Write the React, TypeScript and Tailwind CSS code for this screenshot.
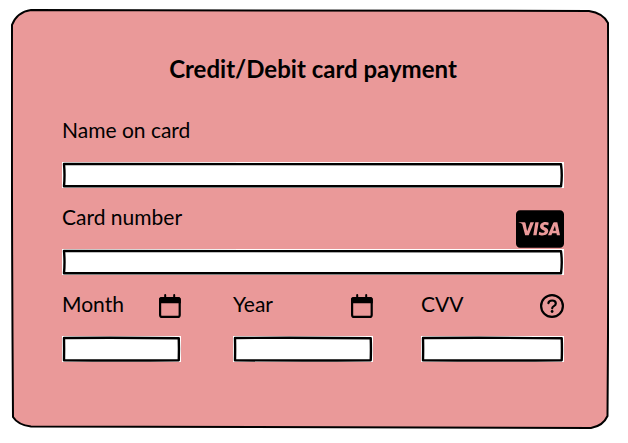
import type { ReactNode } from "react";
import { FaCcVisa } from "react-icons/fa6";

function CalendarIcon() {
  return (
    <svg className="mt-[19px] h-6 w-[22px]" viewBox="0 0 22 24" fill="none" aria-hidden="true">
      <path d="M6.2 1v3M15.2 1v3" stroke="black" strokeWidth="2" strokeLinecap="round" />
      <rect x="1.1" y="4" width="19.6" height="18.9" rx="2" stroke="black" strokeWidth="2.2" />
      <path d="M0 9.2V5.5a2.6 2.6 0 0 1 2.6-2.6h16.6a2.6 2.6 0 0 1 2.6 2.6V9.2z" fill="black" />
    </svg>
  );
}

function HelpIcon() {
  return (
    <svg className="mt-[19px] size-6" viewBox="0 0 24 24" fill="none" aria-hidden="true">
      <circle cx="12" cy="12" r="10.9" stroke="black" strokeWidth="2.2" />
      <path
        d="M8.4 9.2C8.6 7.5 10 6.5 12.1 6.5c2.2 0 3.7 1.1 3.7 2.9 0 1.3-.8 2-2 2.7-1.1.6-1.6 1.1-1.6 2.2"
        stroke="black"
        strokeWidth="2.2"
        strokeLinecap="round"
      />
      <circle cx="12.1" cy="17.5" r="1.4" fill="black" />
    </svg>
  );
}

type FieldProps = { id: string; label: string; icon?: ReactNode };

function Field({ id, label, icon }: FieldProps) {
  return (
    <div>
      <div className="flex h-[61px] items-start justify-between">
        <label htmlFor={id} className="pt-[15px] text-[21px] leading-7">
          {label}
        </label>
        {icon}
      </div>
      <div className="relative h-[26px] bg-white">
        <input id={id} type="text" className="block h-full w-full bg-transparent px-2 text-sm outline-none" />
        <div className="pointer-events-none absolute inset-0.5">
          <svg
            className="block h-full w-full overflow-visible"
            viewBox="0 0 500 22"
            preserveAspectRatio="none"
            fill="none"
            stroke="black"
            strokeLinejoin="round"
            aria-hidden="true"
          >
            <path
              d="M0 0Q250 -.6 499 .3Q500.5 11 499 22.3Q250 22.8 0 22.3Q1 11 0 0Z"
              strokeWidth="2.4"
              vectorEffect="non-scaling-stroke"
            />
          </svg>
        </div>
      </div>
    </div>
  );
}

export default function App() {
  return (
    <main className="bg-white pt-[9px] pr-[19px] pb-[13px] pl-[11px] font-['Lato',sans-serif] text-black">
      <section className="relative">
        <svg
          className="absolute inset-0 h-full w-full"
          viewBox="0 0 598 421"
          preserveAspectRatio="none"
          aria-hidden="true"
        >
          <path
            d="M20 1Q300 .6 578 2Q592 4 597 14Q598 210 596.5 408Q592 418 580 420Q300 420 20 418.5Q7 417 2 409Q.6 210 1 16Q6 3 20 1Z"
            fill="#ea9999"
            stroke="black"
            strokeWidth="2"
            vectorEffect="non-scaling-stroke"
          />
        </svg>
        <form className="relative pt-11 pr-[45px] pb-[67px] pl-[51px]">
          <h1 className="pb-4 text-center text-2xl leading-8 font-bold">Credit/Debit card payment</h1>
          <Field id="name" label="Name on card" />
          <Field id="number" label="Card number" icon={<FaCcVisa className="mt-[17px] size-12" aria-hidden="true" />} />
          <div className="grid grid-cols-[171fr_188fr_143fr]">
            <div className="pr-[52px]">
              <Field id="month" label="Month" icon={<CalendarIcon />} />
            </div>
            <div className="pr-12">
              <Field id="year" label="Year" icon={<CalendarIcon />} />
            </div>
            <Field id="cvv" label="CVV" icon={<HelpIcon />} />
          </div>
        </form>
      </section>
    </main>
  );
}
